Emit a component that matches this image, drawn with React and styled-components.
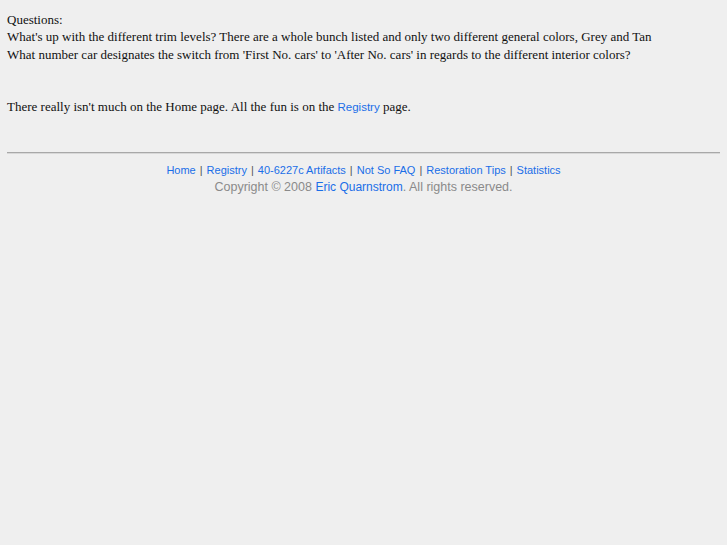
import React from 'react';
import styled, { createGlobalStyle } from 'styled-components';

const GlobalStyle = createGlobalStyle`
  html, body {
    margin: 0;
    padding: 0;
    background: #efefef;
  }
  body {
    padding: 11px 7px 0 7px;
    font-family: "Liberation Serif", "Times New Roman", serif;
    font-size: 13px;
    line-height: 17.4px;
    color: #111;
  }
`

const Content = styled.div`
  display: flex;
  flex-direction: column;
`

const Line = styled.div`
  white-space: nowrap;
`

const Gap = styled.div`
  height: ${props => props.size}px;
`

const Link = styled.a`
  color: #1a6ee8;
  text-decoration: none;
  font-family: "Liberation Sans", Arial, sans-serif;
  font-size: ${props => props.size || 11.5}px;
`

const Rule = styled.hr`
  margin: 0;
  border: none;
  border-top: 1px solid #a8a8a8;
  border-bottom: 1px solid #d8d8d8;
`

const Footer = styled.div`
  display: flex;
  flex-direction: column;
  align-items: center;
  padding-top: 8px;
  font-family: "Liberation Sans", Arial, sans-serif;
  line-height: 17px;
`

const NavRow = styled.div`
  display: flex;
  font-size: 11px;
`

const Sep = styled.span`
  color: #555;
  padding: 0 4px;
`

const Copyright = styled.div`
  color: #8a8a8a;
  font-size: 12.5px;
`

const navItems = ['Home', 'Registry', '40-6227c Artifacts', 'Not So FAQ', 'Restoration Tips', 'Statistics'];

const App = () => (
  <>
    <GlobalStyle />
    <Content>
      <Line>Questions:</Line>
      <Line>What's up with the different trim levels? There are a whole bunch listed and only two different general colors, Grey and Tan</Line>
      <Line>What number car designates the switch from 'First No. cars' to 'After No. cars' in regards to the different interior colors?</Line>
      <Gap size={34.8} />
      <Line>There really isn't much on the Home page. All the fun is on the <Link href="#">Registry</Link> page.</Line>
      <Gap size={36} />
      <Rule />
      <Footer>
        <NavRow>
          {navItems.map((item, i) => (
            <span key={item}>
              {i > 0 && <Sep>|</Sep>}
              <Link href="#" size={11}>{item}</Link>
            </span>
          ))}
        </NavRow>
        <Copyright>Copyright © 2008 <Link href="#" size={12}>Eric Quarnstrom</Link>. All rights reserved.</Copyright>
      </Footer>
    </Content>
  </>
);

export default App;
